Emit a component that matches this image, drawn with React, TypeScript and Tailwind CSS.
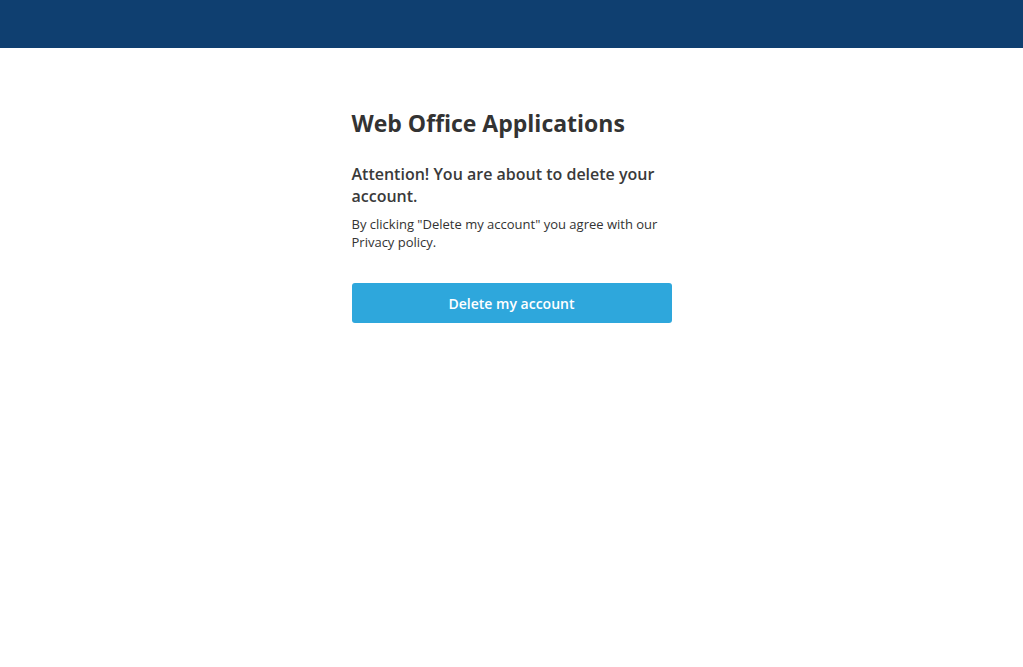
import * as React from "react";

const App: React.FunctionComponent = () => {
  return (
    <div className="min-h-screen bg-white font-['Open_Sans',sans-serif] text-[#333333]">
      <header className="h-12 w-full bg-[#0f3f70]" />
      <main className="mx-auto w-[320px] pt-[60px]">
        <h1 className="text-[23px] leading-[31px] font-bold">
          Web Office Applications
        </h1>
        <h2 className="mt-[24px] text-[16px] leading-[22px] font-semibold text-[#3a3a3a]">
          Attention! You are about to delete your account.
        </h2>
        <p className="mt-[8px] text-[13px] leading-[18px]">
          By clicking "Delete my account" you agree with our Privacy policy.
        </p>
        <button className="mt-[32px] h-10 w-full rounded-[3px] bg-[#2ea7dc] text-[14px] font-semibold text-white">
          Delete my account
        </button>
      </main>
    </div>
  );
};

export default App;
